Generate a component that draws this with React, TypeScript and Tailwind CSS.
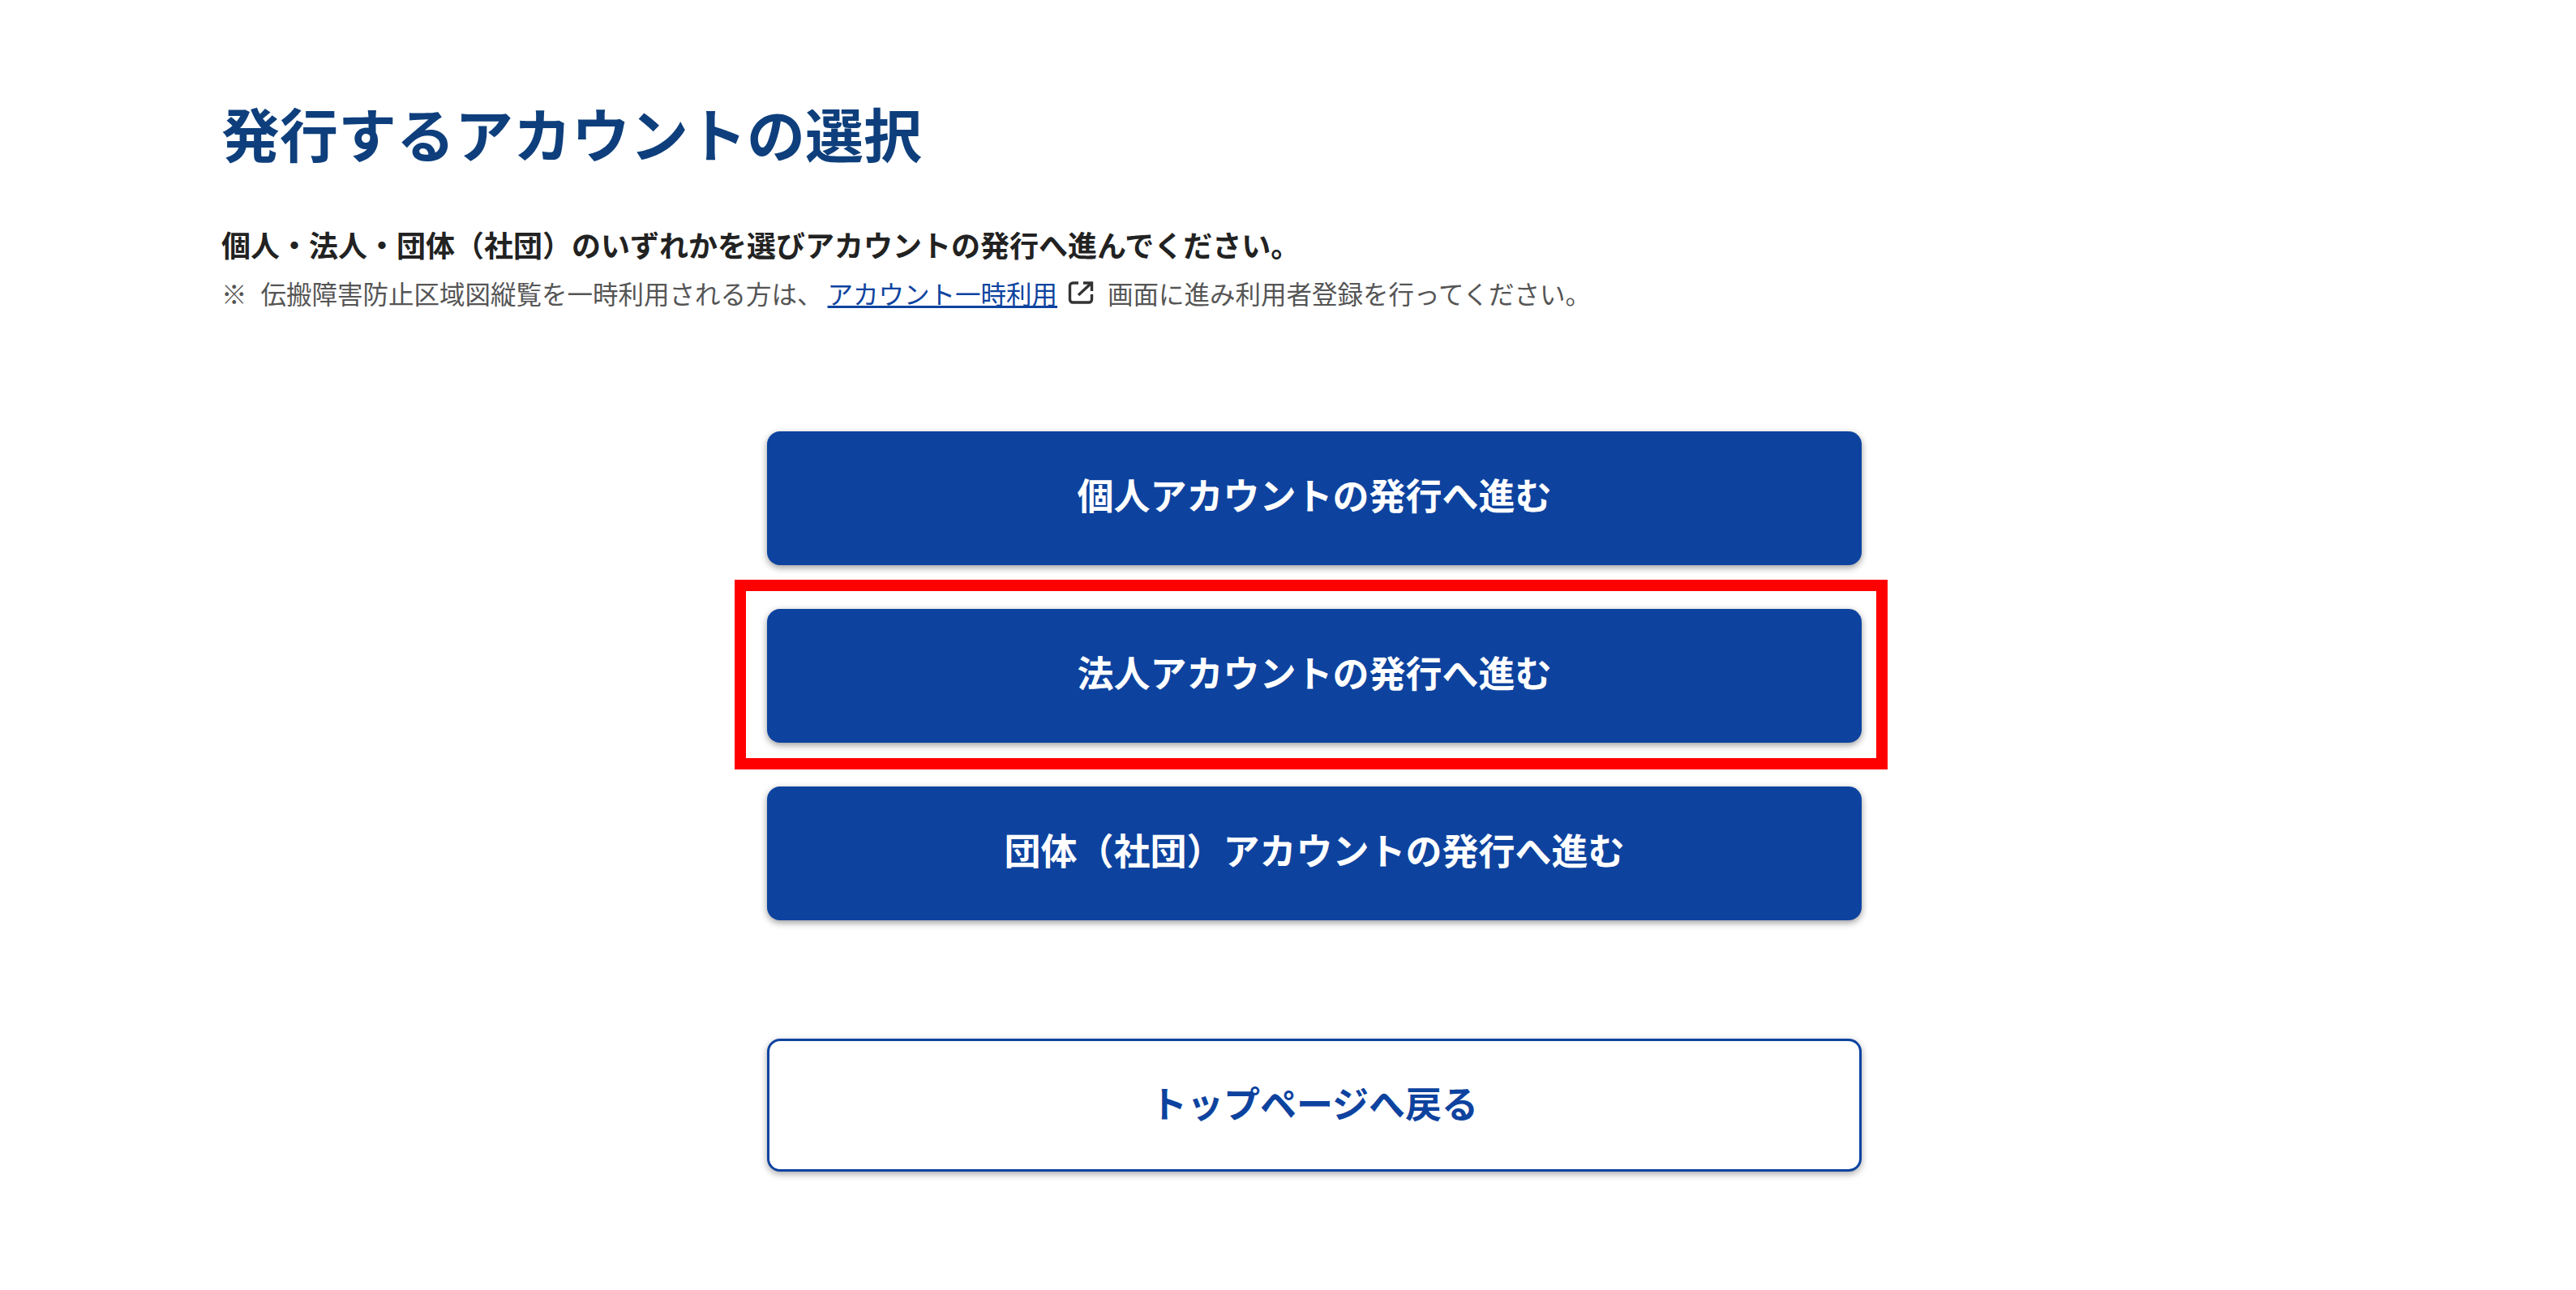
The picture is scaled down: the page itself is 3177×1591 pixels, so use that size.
const jp = "font-['Noto_Sans_CJK_JP','Noto_Sans',sans-serif]";

function ExternalIcon() {
  return (
    <svg viewBox="0 0 32 30" className="ml-[13px] mr-[9px] h-[30px] w-[32px] shrink-0" fill="none" stroke="#333333" strokeWidth="3.4">
      <path d="M13 3H6a3.5 3.5 0 0 0-3.5 3.5v17A3.5 3.5 0 0 0 6 27h20a3.5 3.5 0 0 0 3.5-3.5V17" />
      <path d="M13 18 28 4" />
      <path d="M19 3h10.5v10" />
    </svg>
  );
}

function BlueButton({ label }: { label: string }) {
  return (
    <a className="flex h-[165px] w-[1350px] items-center justify-center rounded-[16px] bg-[#0d439f] pb-[9px] text-[45px] font-bold text-white shadow-[0_3px_8px_rgba(0,0,0,0.4)]">
      {label}
    </a>
  );
}

export default function App() {
  return (
    <div className={`h-[1591px] w-[3177px] overflow-hidden bg-white ${jp}`}>
      <div className="pl-[273px] pt-[108px]">
        <h1 className="text-[72px] font-bold leading-[110px] text-[#0e3f7c]">発行するアカウントの選択</h1>
        <p className="mt-[58px] text-[36px] font-bold leading-[50px] text-[#222222]">
          個人・法人・団体（社団）のいずれかを選びアカウントの発行へ進んでください。
        </p>
        <p className="mt-[10px] flex items-center text-[31.5px] leading-[50px] text-[#555555]">
          <span className="mr-[17px]">※</span>
          <span>伝搬障害防止区域図縦覧を一時利用される方は、</span>
          <span className="ml-[6px] text-[#0d439f] underline">アカウント一時利用</span>
          <ExternalIcon />
          <span className="ml-[8px]">画面に進み利用者登録を行ってください。</span>
        </p>
      </div>
      <div className="ml-[946px] mt-[146px] flex w-[1350px] flex-col">
        <div className="flex flex-col gap-[54px]">
          <BlueButton label="個人アカウントの発行へ進む" />
          <div className="relative">
            <div className="absolute -bottom-[33px] -left-[40px] -right-[32px] -top-[36px] border-[14px] border-[#ff0000]" />
            <BlueButton label="法人アカウントの発行へ進む" />
          </div>
          <BlueButton label="団体（社団）アカウントの発行へ進む" />
        </div>
        <a className="mt-[146px] flex h-[164px] w-[1350px] items-center justify-center rounded-[16px] border-[3px] border-[#0d439f] bg-white pb-[6px] text-[45px] font-bold text-[#0d439f] shadow-[0_3px_8px_rgba(0,0,0,0.35)]">
          トップページへ戻る
        </a>
      </div>
    </div>
  );
}
